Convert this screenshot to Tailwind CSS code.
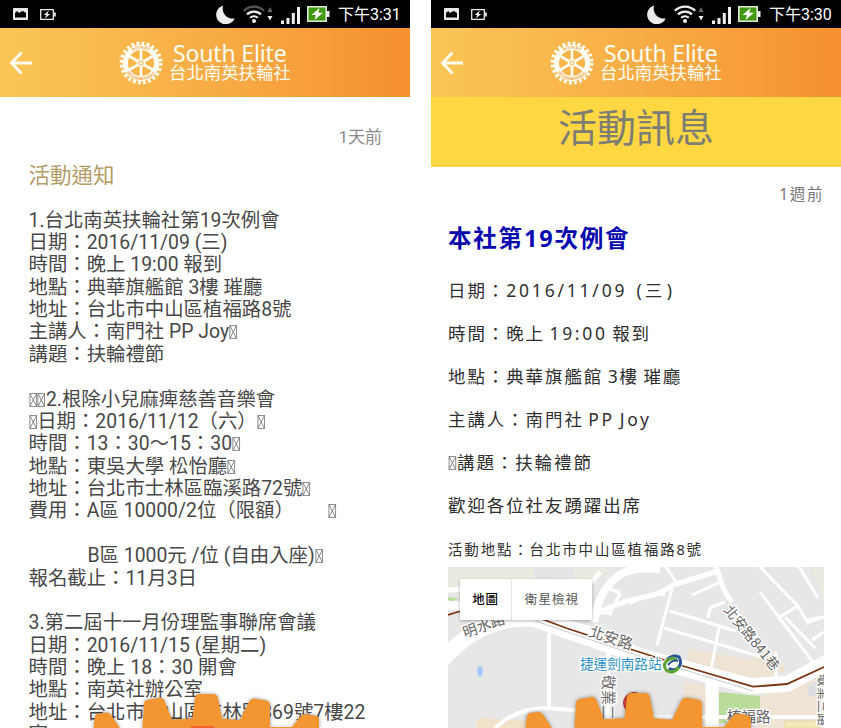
<!DOCTYPE html>
<html lang="zh-Hant">
<head>
<meta charset="utf-8">
<title>South Elite 台北南英扶輪社</title>
<script src="https://cdn.jsdelivr.net/npm/@tailwindcss/browser@4"></script>
</head>
<body class="bg-white w-[841px] h-[728px] overflow-hidden">
<svg width="0" height="0" class="absolute">
  <defs>
    <symbol id="tofu" viewBox="0 0 8 13"><path d="M.8.5h6.2v12H.8zM.8.5l6.2 12M7 .5L.8 12.5" fill="none" stroke="#666" stroke-width=".7"/></symbol>
    <symbol id="pic" viewBox="0 0 15 12"><rect width="15" height="12" rx=".8" fill="#e8e8e8"/><path d="M2 9.5V5l2.2-2L6 5l1.5-1 2.5-1L13 5v4.500z" fill="#000"/></symbol>
    <symbol id="batS" viewBox="0 0 16 11"><path d="M.7.7h12.6v9.6H.7z" fill="none" stroke="#e8e8e8" stroke-width="1.3"/><path d="M14 3.5h1.8v4H14z" fill="#e8e8e8"/><path d="M8.8 1.5L3.8 6h2.6l-1.6 3.5L10.2 5H7.6z" fill="#fff"/></symbol>
    <symbol id="moon" viewBox="0 0 19 19"><path d="M7.2.4A10 10 0 0 0 18.6 13.4 9.6 9.6 0 1 1 7.2.4z" fill="#ececec"/></symbol>
    <symbol id="wifi" viewBox="0 0 31 18"><g fill="none" stroke-width="2.2"><path d="M.8 5.8a14.5 14.5 0 0 1 20.4 0" stroke="#555"/><path d="M4 9.4a10 10 0 0 1 14 0" stroke="#eee"/><path d="M7.2 12.8a5.6 5.6 0 0 1 7.6 0" stroke="#eee"/></g><circle cx="11" cy="16" r="2" fill="#eee"/><path d="M24.5 7l2.5-5 2.5 5z" fill="#666"/><path d="M24.5 11h5l-2.5 4.5z" fill="#eee"/></symbol>
    <symbol id="wifiFull" viewBox="0 0 31 18"><g fill="none" stroke-width="2.2" stroke="#eee"><path d="M.8 5.8a14.5 14.5 0 0 1 20.4 0"/><path d="M4 9.4a10 10 0 0 1 14 0"/><path d="M7.2 12.8a5.6 5.6 0 0 1 7.6 0"/></g><circle cx="11" cy="16" r="2" fill="#eee"/><path d="M24.5 7l2.5-5 2.5 5z" fill="#666"/><path d="M24.5 11h5l-2.5 4.5z" fill="#eee"/></symbol>
    <symbol id="signal" viewBox="0 0 20 17"><path d="M0 13.5h3V17H0zM5.5 11h3v6h-3zM10.8 6h3v11h-3zM16 0h3v17h-3z" fill="#f0f0f0"/></symbol>
    <symbol id="batL" viewBox="0 0 23 16"><path d="M.8.8h18.4v14.4H.8z" fill="#3f9a12" stroke="#dfe8da" stroke-width="1.6"/><path d="M20 5h2.5v6H20z" fill="#eee"/><path d="M12.5 2L4.5 9h4.3L7.5 14 16 6.7h-4.6z" fill="#fff"/></symbol>
    <symbol id="wheel" viewBox="-22 -22 44 44">
      <circle r="19.7" fill="none" stroke="#fffdf2" stroke-width="3.6" stroke-dasharray="2.9 2.257"/>
      <circle r="15.6" fill="none" stroke="#fffdf2" stroke-width="5.2"/>
      <g stroke="#fffdf2" stroke-width="2.6"><path d="M0-14V14M-12.1-7L12.1 7M-12.1 7L12.1-7"/></g>
      <circle r="4.3" fill="#fffdf2"/><circle r="2.2" fill="none" stroke="#f9b24a" stroke-width="1"/>
      <path id="arcT" d="M-14.3 0A14.3 14.3 0 0 1 14.3 0" fill="none"/>
      <path id="arcB" d="M-17.3 0A17.3 17.3 0 0 0 17.3 0" fill="none"/>
      <g fill="#f3a23f" font-family="Liberation Sans" font-weight="700" font-size="4.2" text-anchor="middle"><text><textPath href="#arcT" startOffset="50%">ROTARY</textPath></text><text><textPath href="#arcB" startOffset="50%">INTERNATIONAL</textPath></text></g>
    </symbol>
    <symbol id="cog" viewBox="0 0 230 36"><path d="M1.5 36L3 24Q4 22 6 21.5L15 20.5Q18 21 19 23L28 36H50.5L52 11Q52.5 8.5 55 8L68 5.500Q72 6 73 10L80 27.5 100.5 26.5 103 6Q104 2 107 2H121Q125 2 126 6L130 26.5 148 28 157.5 9Q159 6.5 162 6.5L174 8.5Q178 9 178 13V35H200L209 24Q211 22 214 22L225 24Q227 24.5 227 27V36z" fill="#f39530"/></symbol>
  </defs>
</svg>

<main class="flex gap-[21px] h-[728px]">
  <section class="relative w-[410px] h-[728px] overflow-hidden shrink-0">
    <div class="h-[28px] bg-black flex items-center pl-[13px] pr-[10px] text-white">
      <svg class="w-[15px] h-[12px]"><use href="#pic"/></svg>
      <svg class="w-[16px] h-[11px] ml-[12px]"><use href="#batS"/></svg>
      <svg class="w-[19px] h-[19px] ml-auto"><use href="#moon"/></svg>
      <svg class="w-[31px] h-[18px] ml-[8px]"><use href="#wifi"/></svg>
      <svg class="w-[20px] h-[17px] ml-[7px] mt-[3px]"><use href="#signal"/></svg>
      <svg class="w-[23px] h-[16px] ml-[6px]"><use href="#batL"/></svg>
      <span class="ml-[8px] w-[62px] pt-[2px] whitespace-nowrap text-[16px] leading-[26px] font-['Roboto','Noto_Sans_CJK_TC',sans-serif]">下午3:31</span>
    </div>
    <header class="h-[69px] bg-linear-to-r from-[#fac655] via-[#f8ad45] to-[#f5902e] flex items-center pl-[9px] text-[#fffdf2]">
      <svg class="w-[24px] h-[24px]" viewBox="0 0 24 24" fill="none" stroke="currentColor" stroke-width="3"><path d="M23 12H3M12.500 1.500L2.500 12 12.500 22.500"/></svg>
      <svg class="w-[44px] h-[44px] ml-[86px]"><use href="#wheel"/></svg>
      <div class="ml-[6px] whitespace-nowrap">
        <div class="pl-[4px] h-[23px] leading-[23px] text-[23px] tracking-[-0.15px] font-['Noto_Sans',sans-serif]">South Elite</div>
        <div class="h-[18px] leading-[13px] text-[17.4px] font-['Noto_Sans_CJK_TC',sans-serif]">台北南英扶輪社</div>
      </div>
    </header>
    <article class="pl-[28.5px] pr-[28px] font-['Roboto','Noto_Sans_CJK_TC',sans-serif] text-[#484848]">
      <div class="pt-[28px] text-right text-[17px] leading-[24px] text-[#8a8a8a]">1天前</div>
      <h1 class="mt-[11px] text-[21.5px] leading-[32px] text-[#b49c68]">活動通知</h1>
      <div class="mt-[17.5px] text-[19.4px] leading-[22.38px] whitespace-nowrap *:h-[22.38px]">
        <p>1.台北南英扶輪社第19次例會</p>
        <p>日期：2016/11/09 (三)</p>
        <p>時間：晚上 19:00 報到</p>
        <p>地點：典華旗艦館 3樓 璀廳</p>
        <p>地址：台北市中山區植福路8號</p>
        <p>主講人：南門社 PP Joy<svg class="inline w-[8.7px] h-[14px] align-[-1px]"><use href="#tofu"/></svg></p>
        <p>講題：扶輪禮節</p>
        <p></p>
        <p><svg class="inline w-[8.7px] h-[14px] align-[-1px]"><use href="#tofu"/></svg><svg class="inline w-[8.7px] h-[14px] align-[-1px]"><use href="#tofu"/></svg>2.根除小兒麻痺慈善音樂會</p>
        <p><svg class="inline w-[8.7px] h-[14px] align-[-1px]"><use href="#tofu"/></svg>日期：2016/11/12（六）<svg class="inline w-[8.7px] h-[14px] align-[-1px]"><use href="#tofu"/></svg></p>
        <p>時間：13：30～15：30<svg class="inline w-[8.7px] h-[14px] align-[-1px]"><use href="#tofu"/></svg></p>
        <p>地點：東吳大學 松怡廳<svg class="inline w-[8.7px] h-[14px] align-[-1px]"><use href="#tofu"/></svg></p>
        <p>地址：台北市士林區臨溪路72號<svg class="inline w-[8.7px] h-[14px] align-[-1px]"><use href="#tofu"/></svg></p>
        <p>費用：A區 10000/2位（限額）<svg class="inline w-[8.7px] h-[14px] align-[-1px] ml-[34.5px]"><use href="#tofu"/></svg></p>
        <p></p>
        <p class="pl-[59px]">B區 1000元 /位 (自由入座)<svg class="inline w-[8.7px] h-[14px] align-[-1px]"><use href="#tofu"/></svg></p>
        <p>報名截止：11月3日</p>
        <p></p>
        <p>3.第二屆十一月份理監事聯席會議</p>
        <p>日期：2016/11/15 (星期二)</p>
        <p>時間：晚上 18：30 開會</p>
        <p>地點：南英社辦公室</p>
        <p>地址：台北市中山區吉林路369號7樓22</p>
        <p>室</p>
      </div>
    </article>
    <svg class="absolute left-[92px] bottom-0 w-[230px] h-[36px] drop-shadow-[0_0_2px_rgba(0,0,0,0.4)]"><use href="#cog"/><path d="M99 34h23v2H99z" fill="#f4632e"/></svg>
  </section>

  <section class="relative w-[410px] h-[728px] overflow-hidden shrink-0">
    <div class="h-[28px] bg-black flex items-center pl-[13px] pr-[10px] text-white">
      <svg class="w-[15px] h-[12px]"><use href="#pic"/></svg>
      <svg class="w-[16px] h-[11px] ml-[12px]"><use href="#batS"/></svg>
      <svg class="w-[19px] h-[19px] ml-auto"><use href="#moon"/></svg>
      <svg class="w-[31px] h-[18px] ml-[8px]"><use href="#wifiFull"/></svg>
      <svg class="w-[20px] h-[17px] ml-[7px] mt-[3px]"><use href="#signal"/></svg>
      <svg class="w-[23px] h-[16px] ml-[6px]"><use href="#batL"/></svg>
      <span class="ml-[8px] w-[62px] pt-[2px] whitespace-nowrap text-[16px] leading-[26px] font-['Roboto','Noto_Sans_CJK_TC',sans-serif]">下午3:30</span>
    </div>
    <header class="h-[69px] bg-linear-to-r from-[#fac655] via-[#f8ad45] to-[#f5902e] flex items-center pl-[9px] text-[#fffdf2]">
      <svg class="w-[24px] h-[24px]" viewBox="0 0 24 24" fill="none" stroke="currentColor" stroke-width="3"><path d="M23 12H3M12.500 1.500L2.500 12 12.500 22.500"/></svg>
      <svg class="w-[44px] h-[44px] ml-[86px]"><use href="#wheel"/></svg>
      <div class="ml-[6px] whitespace-nowrap">
        <div class="pl-[4px] h-[23px] leading-[23px] text-[23px] tracking-[-0.15px] font-['Noto_Sans',sans-serif]">South Elite</div>
        <div class="h-[18px] leading-[13px] text-[17.4px] font-['Noto_Sans_CJK_TC',sans-serif]">台北南英扶輪社</div>
      </div>
    </header>
    <div class="h-[70px] bg-[#fed742] text-center text-[39px] leading-[56px] text-[#7d7d74] font-['Noto_Sans_CJK_TC',sans-serif]">活動訊息</div>
    <article class="pl-[17px] font-['Noto_Sans','Noto_Sans_CJK_TC',sans-serif] text-[#303030]">
      <div class="pt-[15px] pr-[17px] text-right text-[15.5px] tracking-[1.6px] leading-[24px] text-[#777]">1週前</div>
      <h1 class="mt-[15px] text-[23.5px] leading-[34px] font-bold tracking-[1.8px] text-[#0505b0]">本社第19次例會</h1>
      <div class="mt-[13.5px] text-[17.5px] leading-[43.2px] tracking-[1.9px] whitespace-nowrap [word-spacing:-2px] *:h-[43.2px]">
        <p>日期：<span class="tracking-[2.8px]">2016/11/09</span> <span class="tracking-[3px]">&#8202;(</span><span class="tracking-[4.6px]">三)</span></p>
        <p>時間：晚上 <span class="tracking-[2.7px]">19:00</span> 報到</p>
        <p>地點：典華旗艦館 3樓 璀廳</p>
        <p>主講人：南門社 <span class="tracking-[2.6px]">PP Joy</span></p>
        <p><svg class="inline w-[9px] h-[14px] align-[-1px]"><use href="#tofu"/></svg>講題：扶輪禮節</p>
        <p>歡迎各位社友踴躍出席</p>
      </div>
      <p class="h-[39.3px] leading-[43px] text-[14.5px] tracking-[1.82px] whitespace-nowrap">活動地點：台北市中山區植福路8號</p>
      <div class="relative w-[376px] h-[161px] overflow-hidden">
        <svg class="block w-[376px] h-[161px]" viewBox="448 567 376 161">
          <rect x="448" y="567" width="376" height="161" fill="#e7e7e7"/>
          <path d="M448 567H612L598 580 560 582 448 590z" fill="#ebeae1"/>
          <path d="M534 567h40v10l-40 3z" fill="#e4e4e6"/>
          <path d="M812 567h12v35z" fill="#ebeae1"/>
          <path d="M448 597l11 2-11 4z" fill="#b9dc9a"/>
          <path d="M688 649l62 10 26-8 10 20-30 12-70-16zM684 682l32 5v41h-32zM757 697l67-20v51h-67z" fill="#efe3d4"/>
          <path d="M719 692l41 4v27h-41z" fill="#b9dc9a"/>
          <path d="M808 686l16-8v18h-16z" fill="#dddde1"/>
          <path d="M478 718l55 3v7h-57z" fill="#f1e1c8"/>
          <path d="M785 721h35v7h-35z" fill="#f3e8b8" stroke="#ddd0a0" stroke-width=".8"/>
          <ellipse cx="480" cy="671" rx="2.8" ry="5.5" fill="#a3c9fb"/>
          <g fill="none" stroke="#fff" stroke-linejoin="round">
            <path stroke-width="16" d="M440 662Q470 628 505 621Q530 615 548 624L640 656 705 674 750 686 787 684 830 661"/>
            <path stroke-width="9" d="M440 604L540 616 600 634"/>
            <path stroke-width="8" d="M594 622Q600 585 623 573Q636 567 660 569"/>
            <path stroke-width="5" d="M448 590L592 582 600 572M596 614Q614 604 640 598Q660 595 673 585L718 571 712 560M718 571Q722 590 732 602"/>
            <path stroke-width="3" d="M607 587L620 594 609 615M594 611L612 614M620 592L606 588M664 564L676 582M692 595L718 583M673 585L657 645M670 611L736 631M664 628L776 661M719 627L711 670M708 618L710 608 725 602M776 652V680M630 604Q650 590 665 595M760 592L815 665M778 618L798 606 760 567M798 606L806 620 824 617M806 623L824 617M798 565L818 598M812 640L824 632M785 617L815 648"/>
            <path stroke-width="4" d="M549 633V707M608 648V728M495 728Q515 709 545 708L588 711M653 717H824"/>
            <path stroke-width="13" d="M712 678V728"/>
          </g>
          <path d="M535 621L630 653 753 691" fill="none" stroke="#ccc" stroke-width="1"/>
          <path d="M448 615L461 611M542 619L566 628 630 649 683 666 753 686.7 787 684 824 667" fill="none" stroke="#7a3414" stroke-width="1.800"/>
          <g font-family="Noto Sans CJK TC,sans-serif" fill="#686868" font-size="14.5" stroke="#fff" stroke-width="2.5" paint-order="stroke">
            <text transform="translate(465 638) rotate(-20)">明水路</text>
            <text transform="translate(588 636) rotate(18)" font-size="15">北安路</text>
            <text transform="translate(723 610) rotate(51)" font-size="14">北安路841巷</text>
            <text transform="translate(602.5 675) rotate(90)" font-size="15">敬業二路</text>
            <text x="727" y="722">植福路</text>
            <text transform="translate(819 674) rotate(90)" font-size="13">敬業三路</text>
            <text x="580" y="669" font-size="13.6" fill="#2d91c2">捷運劍南路站</text>
          </g>
          <circle cx="673" cy="664" r="9.5" fill="#fff"/>
          <g fill="none" stroke-width="3"><path d="M667 660Q672 654 679 657Q683 664 677 669Q672 671 669 668" stroke="#28569a"/><path d="M679 667Q673 675 666 670Q662 664 668 660Q674 656 677 661" stroke="#5da431"/><path d="M668 665Q673 659 678 661" stroke="#28569a" stroke-width="2"/></g>
          <circle cx="634" cy="703" r="10.5" fill="#dc4b3e" stroke="#a33" stroke-width="1"/>
        </svg>
        <div class="absolute left-[12px] top-[12px] h-[41px] flex bg-white shadow-[0_1px_3px_rgba(0,0,0,0.3)] text-[12.5px] leading-[40px] text-[#555] font-['Noto_Sans_CJK_TC',sans-serif] whitespace-nowrap">
          <span class="w-[52px] text-center border-r border-[#e6e6e6] text-black font-medium tracking-[0.8px]">地圖</span>
          <span class="w-[80px] text-center tracking-[1.1px]">衛星檢視</span>
        </div>
      </div>
    </article>
    <svg class="absolute left-[93px] bottom-0 w-[230px] h-[37px] drop-shadow-[0_0_2px_rgba(0,0,0,0.4)]" viewBox="0 0 230 36" preserveAspectRatio="none"><use href="#cog" width="230" height="36"/></svg>
  </section>
</main>
</body>
</html>
